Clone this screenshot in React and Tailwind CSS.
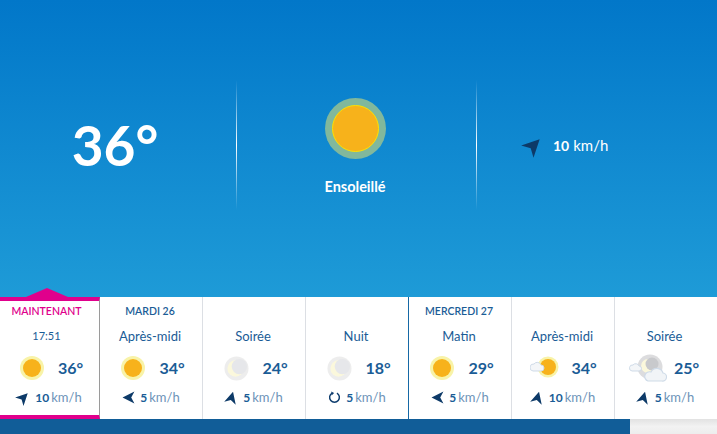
const Arrow = ({ className }) => (
  <svg viewBox="0 0 24 24" className={className}>
    <path d="M12 1 L23 23 L12 17 L1 23 Z" fill="#0d3a68" />
  </svg>
)

const Calm = () => (
  <svg viewBox="0 0 16 16" className="h-[13px] w-[13px]">
    <path d="M11 2.6 A6 6 0 1 1 5 2.6" fill="none" stroke="#0f3d6e" strokeWidth="1.8" />
    <path d="M4 0.5 L7.5 2.6 L4.5 5.5 Z" fill="#0f3d6e" />
  </svg>
)

const Sun = () => (
  <div className="flex h-6 w-6 items-center justify-center rounded-full bg-[#f8f3a8]">
    <div className="h-[18px] w-[18px] rounded-full bg-[#f7b21b]" />
  </div>
)

const Moon = () => (
  <svg viewBox="0 0 26 26" className="h-[25px] w-[25px]">
    <circle cx="13" cy="13" r="12.5" fill="#ededed" />
    <circle cx="12" cy="13" r="8.5" fill="#fbf8dc" />
    <circle cx="16" cy="11" r="8" fill="#e6e7ea" />
  </svg>
)

const SunCloud = () => (
  <svg viewBox="0 0 30 24" className="h-[24px] w-[30px]">
    <circle cx="18" cy="11" r="10.5" fill="#f8f3a8" />
    <circle cx="18" cy="11" r="8" fill="#f7b21b" />
    <path d="M3 15 h8 a3 3 0 0 0 0 -6 a4 4 0 0 0 -7 -1 a3.5 3.5 0 0 0 -1 7 Z" fill="#f4f6f8" stroke="#cfdbe8" strokeWidth="1" />
  </svg>
)

const NightCloud = () => (
  <svg viewBox="0 0 38 28" className="h-[28px] w-[38px] shrink-0">
    <circle cx="21" cy="13" r="12.5" fill="#dcdcde" />
    <circle cx="19" cy="12" r="7" fill="#fbf8dc" />
    <circle cx="23" cy="10" r="6.5" fill="#c8c9cc" />
    <path d="M3 17 h7 a2.5 2.5 0 0 0 0 -5 a3.5 3.5 0 0 0 -6 -1 a3 3 0 0 0 -1 6 Z" fill="#f4f6f8" stroke="#cfdbe8" strokeWidth="1" />
    <path d="M19 27 h14 a4 4 0 0 0 1 -8 a6.5 6.5 0 0 0 -12 -1 a4.5 4.5 0 0 0 -3 9 Z" fill="#f1f4f7" stroke="#cfdbe8" strokeWidth="1.2" />
  </svg>
)

const slots = [
  { day: 'MAINTENANT', label: '17:51', icon: <Sun />, temp: '36°', wind: '10', arrow: 'rotate-45', now: true, border: 'border-[#9a9a9a]' },
  { day: 'MARDI 26', label: 'Après-midi', icon: <Sun />, temp: '34°', wind: '5', arrow: 'rotate-[-90deg]', border: 'border-[#dcdfe4]' },
  { label: 'Soirée', icon: <Moon />, temp: '24°', wind: '5', arrow: 'rotate-[15deg]', border: 'border-[#dcdfe4]' },
  { label: 'Nuit', icon: <Moon />, temp: '18°', wind: '5', calm: true, border: 'border-[#1668a5]' },
  { day: 'MERCREDI 27', label: 'Matin', icon: <Sun />, temp: '29°', wind: '5', arrow: 'rotate-[-90deg]', border: 'border-[#dcdfe4]' },
  { label: 'Après-midi', icon: <SunCloud />, temp: '34°', wind: '10', arrow: 'rotate-[15deg]', border: 'border-[#dcdfe4]' },
  { label: 'Soirée', icon: <NightCloud />, temp: '25°', wind: '5', arrow: 'rotate-[15deg]', border: 'border-transparent' },
]

const Divider = () => (
  <div className="h-[130px] w-px bg-gradient-to-b from-transparent via-white to-transparent" />
)

const Slot = ({ slot }) => (
  <div className={`relative flex h-[122px] flex-col items-center border-r ${slot.border} ${slot.now ? 'border-y-4 border-t-[#e0008c] border-b-[#e0008c]' : ''}`}>
    {slot.now && (
      <div className="absolute left-[26px] top-[-13px] h-[9px] w-[42px] bg-[#e0008c] [clip-path:polygon(0_100%,50%_0,100%_100%)]" />
    )}
    <div className={`flex items-center pr-[2px] text-[10.5px] font-semibold leading-none ${slot.now ? 'mr-[4px] h-[20px] text-[#e0008c]' : 'mt-[3px] h-[22px] text-[#1a5c96]'}`}>
      {slot.day}
    </div>
    <div className={`${slot.now ? 'mt-[6px] mr-[4px] text-[11px]' : 'mt-[5px] text-[13px]'} pr-[2px] leading-[18px] text-[#1a5c96]`}>{slot.label}</div>
    <div className="mt-[9px] flex h-[28px] items-center gap-[11px] pl-[1px]">
      <div className="flex w-[30px] justify-center">{slot.icon}</div>
      <span className="text-[16px] font-bold text-[#1a5c96]">{slot.temp}</span>
    </div>
    <div className="mt-[7px] flex items-center gap-[5px] text-[12px] leading-4">
      {slot.calm ? <Calm /> : <Arrow className={`h-[13px] w-[13px] ${slot.arrow}`} />}
      <span>
        <b className="font-bold text-[#1a5c96]">{slot.wind}</b>
        <span className="ml-[2px] text-[13px] text-[#6d93b8]">km/h</span>
      </span>
    </div>
  </div>
)

export default function App() {
  return (
    <div className="h-[434px] w-[717px] overflow-hidden font-['Lato','Noto_Sans',sans-serif]">
      {/* HERO */}
      <section className="flex h-[297px] items-center bg-gradient-to-b from-[#0277c9] to-[#1e9bd7] pb-[7px] text-white">
        <div className="flex w-[236px] justify-center pr-[6px] text-[55px] font-bold leading-none">36°</div>
        <Divider />
        <div className="flex w-[239px] flex-col items-center pt-[5px] pr-[3px]">
          <div className="flex h-[61px] w-[61px] items-center justify-center rounded-full bg-[#81b89c]">
            <div className="h-[47px] w-[47px] rounded-full border border-[#ffe100] bg-[#f7b21b]" />
          </div>
          <div className="mt-[18px] text-[14.5px] font-bold leading-5">Ensoleillé</div>
        </div>
        <Divider />
        <div className="flex flex-1 items-center gap-[10px] pl-[47px]">
          <Arrow className="h-[19px] w-[19px] rotate-45" />
          <span className="text-[14px]">
            <b className="font-bold">10</b>
            <span className="ml-1 text-[15px]">km/h</span>
          </span>
        </div>
      </section>

      {/* PREVISIONS */}
      <section className="grid h-[122px] grid-cols-[100px_103px_103px_103px_103px_103px_102px] bg-white">
        {slots.map((slot, i) => (
          <Slot key={i} slot={slot} />
        ))}
      </section>

      {/* BARRE */}
      <div className="flex h-[15px] bg-[#115d98]">
        <div className="flex-1" />
        <div className="w-[87px] bg-gradient-to-b from-[#e2e2e2] via-[#f2f2f2] to-[#ededed]" />
      </div>
    </div>
  )
}
